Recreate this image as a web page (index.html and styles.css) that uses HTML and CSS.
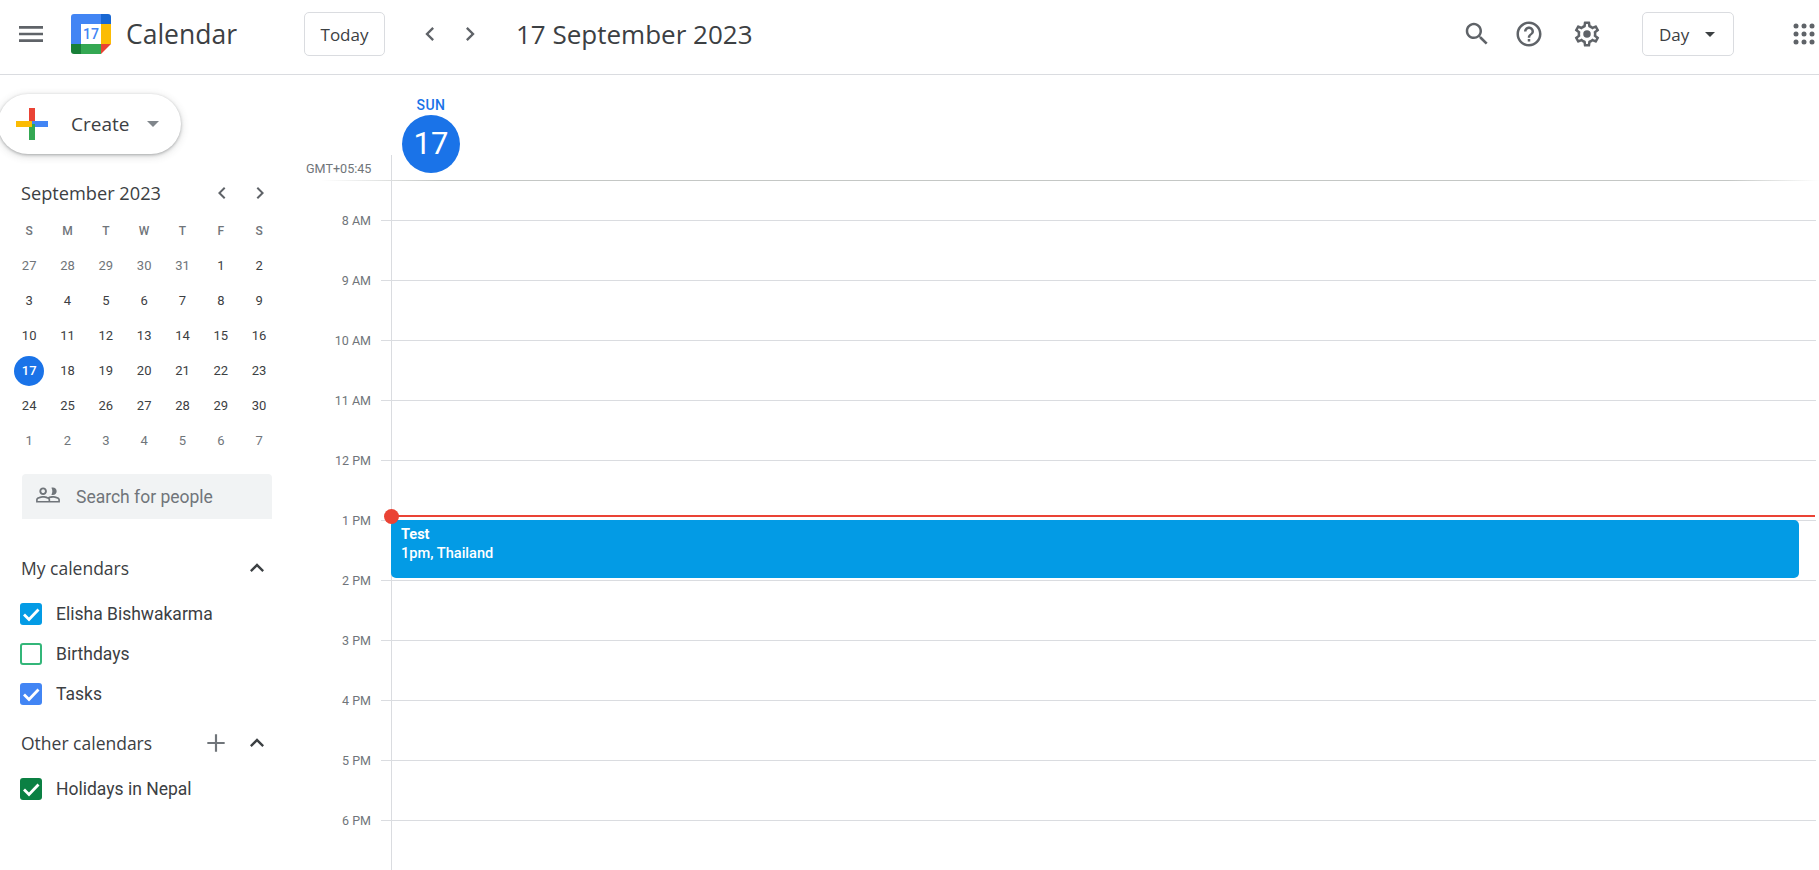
FILE: index.html
```html
<!DOCTYPE html>
<html lang="en">
<head>
    <meta charset="UTF-8">
    <meta name="viewport" content="width=device-width, initial-scale=1.0">
    <title>Calendar</title>
    <link rel="stylesheet" href="styles.css">
</head>
<body>
    <!-- Top bar -->
    <header class="topbar">
        <svg class="icon menu-icon" viewBox="0 0 24 24"><path d="M3 18h18v-2H3v2zm0-5h18v-2H3v2zm0-7v2h18V6H3z"/></svg>
        <div class="logo">
            <svg viewBox="0 0 40 40" width="40" height="40">
                <path d="M3 0h30v10H10v20H0V3a3 3 0 0 1 3-3z" fill="#4285f4"/>
                <path d="M30 0h7a3 3 0 0 1 3 3v7H30z" fill="#1967d2"/>
                <rect x="30" y="10" width="10" height="20" fill="#fbbc04"/>
                <rect x="10" y="30" width="20" height="10" fill="#34a853"/>
                <path d="M0 30h10v10H3a3 3 0 0 1-3-3z" fill="#188038"/>
                <path d="M30 30h10L30 40z" fill="#ea4335"/>
            </svg>
            <span class="logo-day">17</span>
        </div>
        <span class="brand">Calendar</span>
        <button class="btn today-btn">Today</button>
        <svg class="icon nav-prev" viewBox="0 0 24 24"><path d="M15.41 7.41 14 6l-6 6 6 6 1.41-1.41L10.83 12z"/></svg>
        <svg class="icon nav-next" viewBox="0 0 24 24"><path d="M8.59 16.59 10 18l6-6-6-6-1.41 1.41L13.17 12z"/></svg>
        <h1 class="date-title">17 September 2023</h1>
        <svg class="icon tool-search" viewBox="0 0 24 24"><path d="M15.5 14h-.79l-.28-.27C15.41 12.59 16 11.11 16 9.5 16 5.91 13.09 3 9.5 3S3 5.91 3 9.5 5.91 16 9.5 16c1.61 0 3.09-.59 4.23-1.57l.27.28v.79l5 4.99L20.49 19l-4.99-5zm-6 0C7.01 14 5 11.99 5 9.5S7.01 5 9.5 5 14 7.01 14 9.5 11.99 14 9.5 14z"/></svg>
        <svg class="icon tool-help" viewBox="0 0 24 24"><path d="M11 18h2v-2h-2v2zm1-16C6.48 2 2 6.48 2 12s4.48 10 10 10 10-4.48 10-10S17.52 2 12 2zm0 18c-4.41 0-8-3.59-8-8s3.59-8 8-8 8 3.59 8 8-3.59 8-8 8zm0-14c-2.21 0-4 1.79-4 4h2c0-1.1.9-2 2-2s2 .9 2 2c0 2-3 1.75-3 5h2c0-2.25 3-2.5 3-5 0-2.21-1.79-4-4-4z"/></svg>
        <svg class="icon tool-gear" viewBox="0 0 24 24"><path d="M19.43 12.98c.04-.32.07-.64.07-.98 0-.34-.03-.66-.07-.98l2.11-1.65c.19-.15.24-.42.12-.64l-2-3.46c-.09-.16-.26-.25-.44-.25-.06 0-.12.01-.17.03l-2.49 1c-.52-.4-1.08-.73-1.69-.98l-.38-2.65C14.46 2.18 14.25 2 14 2h-4c-.25 0-.46.18-.49.42l-.38 2.65c-.61.25-1.17.59-1.69.98l-2.49-1c-.06-.02-.12-.03-.18-.03-.17 0-.34.09-.43.25l-2 3.46c-.13.22-.07.49.12.64l2.11 1.65c-.04.32-.07.65-.07.98 0 .33.03.66.07.98l-2.11 1.65c-.19.15-.24.42-.12.64l2 3.46c.09.16.26.25.44.25.06 0 .12-.01.17-.03l2.49-1c.52.4 1.08.73 1.69.98l.38 2.65c.03.24.24.42.49.42h4c.25 0 .46-.18.49-.42l.38-2.65c.61-.25 1.17-.59 1.69-.98l2.49 1c.06.02.12.03.18.03.17 0 .34-.09.43-.25l2-3.46c.12-.22.07-.49-.12-.64l-2.11-1.65zm-1.98-1.71c.04.31.05.52.05.73 0 .21-.02.43-.05.73l-.14 1.13.89.7 1.08.84-.7 1.21-1.27-.51-1.04-.42-.9.68c-.43.32-.84.56-1.25.73l-1.06.43-.16 1.13-.2 1.35h-1.4l-.19-1.35-.16-1.13-1.06-.43c-.43-.18-.83-.41-1.23-.71l-.91-.7-1.06.43-1.27.51-.7-1.21 1.08-.84.89-.7-.14-1.13c-.03-.31-.05-.54-.05-.74s.02-.43.05-.73l.14-1.13-.89-.7-1.08-.84.7-1.21 1.27.51 1.04.42.9-.68c.43-.32.84-.56 1.25-.73l1.06-.43.16-1.13.2-1.35h1.39l.19 1.35.16 1.13 1.06.43c.43.18.83.41 1.23.71l.91.7 1.06-.43 1.27-.51.7 1.21-1.07.85-.89.7.14 1.13zM12 9a3 3 0 1 0 0 6 3 3 0 0 0 0-6z"/></svg>
        <button class="btn day-btn">Day<span class="caret"></span></button>
        <svg class="apps" viewBox="0 0 22 22" width="22" height="22">
            <circle cx="3" cy="3" r="2.5"/><circle cx="11" cy="3" r="2.5"/><circle cx="19" cy="3" r="2.5"/>
            <circle cx="3" cy="11" r="2.5"/><circle cx="11" cy="11" r="2.5"/><circle cx="19" cy="11" r="2.5"/>
            <circle cx="3" cy="19" r="2.5"/><circle cx="11" cy="19" r="2.5"/><circle cx="19" cy="19" r="2.5"/>
        </svg>
    </header>

    <div class="layout">
        <!-- Sidebar -->
        <aside class="sidebar">
            <div class="create">
                <svg viewBox="0 0 32 32" width="32" height="32">
                    <rect x="13" y="0" width="6" height="16" fill="#ea4335"/>
                    <rect x="16" y="13" width="16" height="6" fill="#4285f4"/>
                    <rect x="13" y="16" width="6" height="16" fill="#34a853"/>
                    <rect x="0" y="13" width="16" height="6" fill="#fbbc04"/>
                </svg>
                <span class="create-label">Create</span>
                <span class="caret caret-light"></span>
            </div>

            <div class="mini-head">
                <span class="mini-title">September 2023</span>
                <svg class="icon mini-prev" viewBox="0 0 24 24"><path d="M15.41 7.41 14 6l-6 6 6 6 1.41-1.41L10.83 12z"/></svg>
                <svg class="icon mini-next" viewBox="0 0 24 24"><path d="M8.59 16.59 10 18l6-6-6-6-1.41 1.41L13.17 12z"/></svg>
            </div>
            <div class="mini-grid">
                <span class="wd">S</span><span class="wd">M</span><span class="wd">T</span><span class="wd">W</span><span class="wd">T</span><span class="wd">F</span><span class="wd">S</span>
                <span class="off">27</span><span class="off">28</span><span class="off">29</span><span class="off">30</span><span class="off">31</span><span>1</span><span>2</span>
                <span>3</span><span>4</span><span>5</span><span>6</span><span>7</span><span>8</span><span>9</span>
                <span>10</span><span>11</span><span>12</span><span>13</span><span>14</span><span>15</span><span>16</span>
                <span><b class="today">17</b></span><span>18</span><span>19</span><span>20</span><span>21</span><span>22</span><span>23</span>
                <span>24</span><span>25</span><span>26</span><span>27</span><span>28</span><span>29</span><span>30</span>
                <span class="off">1</span><span class="off">2</span><span class="off">3</span><span class="off">4</span><span class="off">5</span><span class="off">6</span><span class="off">7</span>
            </div>

            <div class="people">
                <svg class="icon" viewBox="0 0 24 24"><path d="M16.5 13c-1.2 0-3.07.34-4.5 1-1.43-.67-3.3-1-4.5-1C5.33 13 1 14.08 1 16.25V19h22v-2.75c0-2.17-4.33-3.25-6.5-3.25zm-4 4.5h-10v-1.25c0-.54 2.56-1.75 5-1.75s5 1.21 5 1.75v1.25zm9 0H14v-1.25c0-.46-.2-.86-.52-1.22.88-.3 1.96-.53 3.02-.53 2.44 0 5 1.21 5 1.75v1.25zM7.5 12c1.93 0 3.5-1.57 3.5-3.5S9.43 5 7.5 5 4 6.57 4 8.5 5.57 12 7.5 12zm0-5.2c.94 0 1.7.76 1.7 1.7s-.76 1.7-1.7 1.7-1.7-.76-1.7-1.7.76-1.7 1.7-1.7zm9 5.2c1.93 0 3.5-1.57 3.5-3.5S18.43 5 16.5 5c-.5 0-1 .1-1.4.3.6.9.9 2 .9 3.2s-.3 2.3-.9 3.2c.4.2.9.3 1.4.3z"/></svg>
                <span>Search for people</span>
            </div>

            <div class="section-head section-mine">
                <span class="section-title">My calendars</span>
                <svg class="icon chevron-up" viewBox="0 0 24 24"><path d="M12 8l-6 6 1.41 1.41L12 10.83l4.59 4.58L18 14z"/></svg>
            </div>
            <ul class="cal-list">
                <li><span class="check check-sky"><svg viewBox="0 0 22 22"><path d="M4 11.5l5 5L18.5 6.5" /></svg></span>Elisha Bishwakarma</li>
                <li><span class="check check-empty"></span>Birthdays</li>
                <li><span class="check check-blue"><svg viewBox="0 0 22 22"><path d="M4 11.5l5 5L18.5 6.5" /></svg></span>Tasks</li>
            </ul>

            <div class="section-head section-other">
                <span class="section-title">Other calendars</span>
                <svg class="icon plus" viewBox="0 0 24 24"><path d="M20 13h-7v7h-2v-7H4v-2h7V4h2v7h7z"/></svg>
                <svg class="icon chevron-up" viewBox="0 0 24 24"><path d="M12 8l-6 6 1.41 1.41L12 10.83l4.59 4.58L18 14z"/></svg>
            </div>
            <ul class="cal-list">
                <li><span class="check check-green"><svg viewBox="0 0 22 22"><path d="M4 11.5l5 5L18.5 6.5" /></svg></span>Holidays in Nepal</li>
            </ul>
        </aside>

        <!-- Day view -->
        <main class="day-view">
            <div class="day-head">
                <div class="gmt">GMT+05:45</div>
                <div class="day-col">
                    <div class="day-name">SUN</div>
                    <div class="day-num">17</div>
                </div>
            </div>
            <div class="head-line"></div>
            <div class="hours">
                <div class="hour"><span>8 AM</span><i></i></div>
                <div class="hour"><span>9 AM</span><i></i></div>
                <div class="hour"><span>10 AM</span><i></i></div>
                <div class="hour"><span>11 AM</span><i></i></div>
                <div class="hour"><span>12 PM</span><i></i></div>
                <div class="hour"><span>1 PM</span><i></i></div>
                <div class="hour"><span>2 PM</span><i></i></div>
                <div class="hour"><span>3 PM</span><i></i></div>
                <div class="hour"><span>4 PM</span><i></i></div>
                <div class="hour"><span>5 PM</span><i></i></div>
                <div class="hour"><span>6 PM</span><i></i></div>
            </div>
            <div class="v-line"></div>
            <div class="event">
                <strong>Test</strong>
                <span>1pm, Thailand</span>
            </div>
            <div class="now-line"></div>
            <div class="now-dot"></div>
        </main>
    </div>
</body>
</html>
```

FILE: styles.css
```css
* {
    box-sizing: border-box;
}
body {
    margin: 0;
    height: 100vh;
    overflow: hidden;
    background: #fff;
    color: #3c4043;
    font-family: 'Roboto', sans-serif;
}
.icon {
    display: block;
    flex: none;
    fill: #5f6368;
}

/* top bar */
.topbar {
    display: flex;
    align-items: center;
    height: 75px;
    border-bottom: 1px solid #dadce0;
    padding-bottom: 6px;
}
.menu-icon {
    width: 32px;
    height: 32px;
    margin-left: 15px;
}
.logo {
    position: relative;
    width: 40px;
    height: 40px;
    margin-left: 24px;
}
.logo svg {
    display: block;
}
.logo-day {
    position: absolute;
    inset: 10px;
    display: flex;
    align-items: center;
    justify-content: center;
    background: #fff;
    color: #4285f4;
    font-size: 14px;
    font-weight: 500;
}
.brand {
    flex: none;
    margin-left: 15px;
    width: 178px;
    font-family: 'Open Sans', sans-serif;
    font-size: 26.5px;
    color: #3c4043;
}
.btn {
    display: flex;
    align-items: center;
    height: 44px;
    padding: 0;
    border: 1px solid #dadce0;
    border-radius: 5px;
    background: #fff;
    color: #3c4043;
    font-family: 'Open Sans', sans-serif;
    font-size: 17px;
    font-weight: 500;
}
.today-btn {
    width: 81px;
    justify-content: center;
}
.nav-prev {
    width: 28px;
    height: 28px;
    margin-left: 31px;
}
.nav-next {
    width: 28px;
    height: 28px;
    margin-left: 12px;
}
.date-title {
    margin: 0 0 0 32px;
    font-family: 'Open Sans', sans-serif;
    font-size: 26px;
    font-weight: 400;
    color: #3c4043;
}
.tool-search,
.tool-help,
.tool-gear {
    width: 30px;
    height: 30px;
}
.tool-search {
    margin-left: auto;
}
.tool-help {
    margin-left: 22px;
}
.tool-gear {
    margin-left: 28px;
}
.day-btn {
    width: 92px;
    margin-left: 40px;
    padding-left: 16px;
}
.caret {
    display: block;
    width: 0;
    height: 0;
    margin-left: 16px;
    border-left: 5px solid transparent;
    border-right: 5px solid transparent;
    border-top: 5px solid #3c4043;
}
.caret-light {
    border-left-width: 6px;
    border-right-width: 6px;
    border-top: 6px solid #80868b;
    margin-left: 18px;
}
.apps {
    display: block;
    margin-left: 59px;
    margin-right: 4px;
    fill: #5f6368;
}

.layout {
    display: flex;
    height: calc(100vh - 75px);
}

/* sidebar */
.sidebar {
    flex: none;
    width: 291px;
}
.create {
    display: flex;
    align-items: center;
    width: 183px;
    height: 60px;
    margin: 19px 0 0 -2px;
    padding-left: 18px;
    border-radius: 30px;
    background: #fff;
    box-shadow: 0 1px 3px rgba(60, 64, 67, 0.35), 0 2px 8px rgba(60, 64, 67, 0.2);
}
.create-label {
    margin-left: 23px;
    font-family: 'Open Sans', sans-serif;
    font-size: 19px;
    font-weight: 500;
}
.mini-head {
    display: flex;
    align-items: center;
    height: 24px;
    margin: 27px 0 0 21px;
}
.mini-title {
    flex: none;
    width: 189px;
    font-family: 'Open Sans', sans-serif;
    font-size: 18.2px;
    font-weight: 500;
    white-space: nowrap;
}
.mini-prev,
.mini-next {
    width: 24px;
    height: 24px;
}
.mini-next {
    margin-left: 14px;
}
.mini-grid {
    display: grid;
    grid-template-columns: repeat(7, 38.33px);
    grid-auto-rows: 35px;
    margin: 8px 0 0 10px;
    font-size: 13px;
    font-weight: 400;
    color: #3c4043;
}
.mini-grid span {
    display: flex;
    align-items: center;
    justify-content: center;
}
.mini-grid .wd,
.mini-grid .off {
    color: #70757a;
}
.mini-grid .wd {
    font-size: 12px;
    font-weight: 500;
}
.today {
    display: flex;
    align-items: center;
    justify-content: center;
    width: 30px;
    height: 30px;
    border-radius: 50%;
    background: #1a73e8;
    color: #fff;
    font-weight: 500;
}
.people {
    display: flex;
    align-items: center;
    width: 250px;
    height: 45px;
    margin: 16px 0 0 22px;
    padding-left: 13px;
    border-radius: 4px 4px 0 0;
    background: #f1f3f4;
    color: #70757a;
    font-size: 17.5px;
}
.people svg {
    width: 26px;
    height: 26px;
    margin: -4px 15px 0 0;
    fill: #70757a;
}
.section-head {
    display: flex;
    align-items: center;
    width: 250px;
    height: 24px;
    margin-left: 21px;
}
.section-mine {
    margin-top: 37px;
}
.section-other {
    margin-top: 17px;
}
.section-title {
    font-family: 'Open Sans', sans-serif;
    font-size: 17.5px;
    font-weight: 500;
}
.chevron-up {
    width: 28px;
    height: 28px;
    margin-left: auto;
    fill: #3c4043;
}
.plus {
    width: 26px;
    height: 26px;
    margin-left: auto;
    fill: #70757a;
}
.plus + .chevron-up {
    margin-left: 14px;
}
.cal-list {
    list-style: none;
    margin: 14px 0 0 20px;
    padding: 0;
    font-size: 17.5px;
}
.cal-list li {
    display: flex;
    align-items: center;
    height: 40px;
}
.check {
    flex: none;
    width: 22px;
    height: 22px;
    margin-right: 14px;
    border-radius: 3px;
}
.check svg {
    display: block;
    fill: none;
    stroke: #fff;
    stroke-width: 2.8;
}
.check-sky {
    background: #039be5;
}
.check-blue {
    background: #4285f4;
}
.check-green {
    background: #0b8043;
}
.check-empty {
    border: 2px solid #33b679;
}

/* day view */
.day-view {
    position: relative;
    flex: 1;
    overflow: hidden;
}
.day-head {
    display: flex;
    height: 105px;
}
.gmt {
    flex: none;
    width: 100px;
    padding: 86px 0 0 15px;
    font-size: 12.6px;
    color: #70757a;
    white-space: nowrap;
}
.day-col {
    display: flex;
    flex-direction: column;
    align-items: center;
    width: 58px;
    margin-left: 11px;
    padding-top: 22px;
}
.day-name {
    height: 18px;
    color: #1a73e8;
    font-size: 14px;
    font-weight: 500;
    line-height: 16px;
    letter-spacing: 0.5px;
}
.day-num {
    flex: none;
    width: 58px;
    height: 58px;
    border-radius: 50%;
    background: #1a73e8;
    color: #fff;
    font-size: 31px;
    line-height: 58px;
    text-align: center;
}
.head-line {
    height: 1px;
    margin: 0 0 0 30px;
    background: linear-gradient(90deg, #fff, #c4c7c5 8%, #c4c7c5 94%, #fff);
}
.hours {
    padding: 9px 3px 0 0;
}
.hour {
    display: flex;
    align-items: center;
    height: 60px;
}
.hour span {
    flex: none;
    width: 80px;
    font-size: 12.5px;
    color: #70757a;
    text-align: right;
}
.hour i {
    flex: 1;
    height: 1px;
    margin-left: 10px;
    background: #dadce0;
}
.v-line {
    position: absolute;
    left: 100px;
    top: 80px;
    bottom: 0;
    width: 1px;
    background: #dadce0;
}
.event {
    position: absolute;
    left: 100px;
    top: 445px;
    width: 1408px;
    height: 58px;
    padding: 5px 10px;
    border-radius: 5px;
    background: #039be5;
    color: #fff;
    font-size: 14.6px;
    line-height: 19px;
}
.event strong,
.event span {
    display: block;
    font-weight: 500;
}
.event strong {
    font-size: 14.5px;
    font-weight: 700;
}
.now-line {
    position: absolute;
    left: 101px;
    right: 4px;
    top: 440px;
    height: 2px;
    background: #ea4335;
}
.now-dot {
    position: absolute;
    left: 93px;
    top: 434px;
    width: 15px;
    height: 15px;
    border-radius: 50%;
    background: #ea4335;
}
```
